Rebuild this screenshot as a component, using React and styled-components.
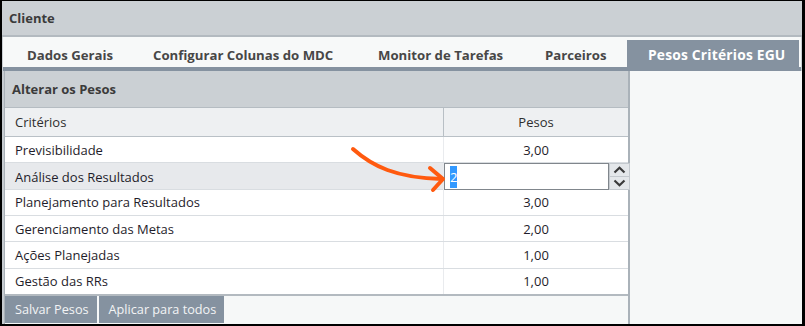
import React from "react";
import styled, { createGlobalStyle } from "styled-components";

const Global = createGlobalStyle`
  html, body { margin: 0; padding: 0; background: #fff; }
  body { font-family: "Open Sans", "Noto Sans", sans-serif; }
  * { box-sizing: border-box; }
`;

const Frame = styled.div`
  position: relative;
  width: 805px;
  height: 326px;
  border-style: solid;
  border-color: #000;
  border-width: 1px 3px 2px 2px;
  background: #cbd0d4;
  display: flex;
  flex-direction: column;
  overflow: hidden;
`;

const TitleBar = styled.div`
  flex: none;
  height: 36px;
  border-bottom: 2px solid #b3bac0;
  padding: 0 0 1px 7px;
  display: flex;
  align-items: center;
  font-weight: 700;
  font-size: 13px;
  color: #3b3b3b;
`;

const TabBar = styled.div`
  flex: none;
  height: 30px;
  margin: 0 1px;
  padding-left: 2px;
  background: #f7f9f9;
  display: flex;
  align-items: flex-end;
`;

const Tab = styled.div`
  flex: none;
  width: ${(p) => p.$w}px;
  height: ${(p) => (p.$active ? "27px" : "30px")};
  padding: ${(p) => (p.$active ? "2px 0 0 21px" : "5px 0 0 22px")};
  display: flex;
  align-items: center;
  white-space: nowrap;
  font-weight: 700;
  font-size: ${(p) => (p.$active ? "13.8px" : "13.2px")};
  letter-spacing: ${(p) => (p.$active ? "0.2px" : "0")};
  color: ${(p) => (p.$active ? "#ffffff" : "#474747")};
  background: ${(p) => (p.$active ? "#8592a0" : "transparent")};
`;

const Strip = styled.div`
  flex: none;
  height: 4px;
  margin: 0 1px;
  background: #8592a0;
`;

const Body = styled.div`
  flex: 1;
  display: flex;
  padding-left: 2px;
  background: #c6cbd0;
`;

const Panel = styled.div`
  width: 626px;
  display: flex;
  flex-direction: column;
  border-left: 1px solid #a9b1b8;
  border-right: 2px solid #aab2b9;
  background: #f6f8f8;
`;

const PanelTitle = styled.div`
  height: 37px;
  border-bottom: 1px solid #b5bcc2;
  background: #cbd0d4;
  padding: 0 0 0 7px;
  display: flex;
  align-items: center;
  font-weight: 700;
  font-size: 13px;
  color: #3b3b3b;
`;

const Table = styled.div`
  background: #fff;
`;

const HeadRow = styled.div`
  display: grid;
  grid-template-columns: 439px 1fr;
  height: 29px;
  border-bottom: 1px solid #b9c0c6;
  background: #eef0f2;
`;

const HeadCell = styled.div`
  display: flex;
  align-items: center;
  justify-content: ${(p) => (p.$center ? "center" : "flex-start")};
  padding-left: ${(p) => (p.$center ? "0" : "10px")};
  border-right: ${(p) => (p.$center ? "none" : "1px solid #b8bfc5")};
  font-size: 13px;
  color: #2e2e2e;
`;

const Row = styled.div`
  display: grid;
  grid-template-columns: 439px 1fr;
  height: 26.33px;
  border-bottom: 1px solid #d9dde1;
  background: ${(p) => (p.$selected ? "#e7e9ec" : "#ffffff")};
  &:last-child {
    height: 27.33px;
    border-bottom: 2px solid #b3bac0;
  }
`;

const Cell = styled.div`
  display: flex;
  align-items: center;
  justify-content: ${(p) => (p.$center ? "center" : "flex-start")};
  padding-left: ${(p) => (p.$center ? "0" : "10px")};
  border-right: ${(p) => (p.$center ? "none" : "1px solid #e9ebee")};
  font-size: 13px;
  color: #1f1d2b;
  white-space: nowrap;
`;

const EditorCell = styled.div`
  display: flex;
  margin-right: -2px;
  height: 27px;
  position: relative;
  z-index: 1;
`;

const EditBox = styled.div`
  flex: 1;
  border: 1px solid #80868c;
  background: #fff;
  display: flex;
  align-items: center;
  padding-left: 5px;
  font-size: 13px;
`;

const Selected = styled.span`
  background: #3399ff;
  color: #fff;
  padding: 1px 0;
  line-height: 20px;
`;

const Spinner = styled.div`
  width: 21px;
  display: flex;
  flex-direction: column;
`;

const SpinBtn = styled.div`
  flex: 1;
  background: #e4e7ea;
  border: 1px solid #c4c9ce;
  border-top-width: ${(p) => (p.$down ? "0" : "1px")};
  display: flex;
  align-items: center;
  justify-content: center;
`;

const ButtonBar = styled.div`
  display: flex;
  gap: 2px;
  height: 27px;
  background: #f6f8f8;
`;

const Button = styled.button`
  border: none;
  margin: 0;
  padding: 0 8px 0 10px;
  background: #8592a0;
  color: #f3f4f5;
  font-family: inherit;
  font-size: 12.7px;
  cursor: pointer;
`;

const Side = styled.div`
  flex: 1;
  background: #f6f8f8;
`;

const Overlay = styled.svg`
  position: absolute;
  left: -2px;
  top: -1px;
  pointer-events: none;
  z-index: 5;
`;

const Chevron = ({ up }) => (
  <svg width="13" height="8" viewBox="0 0 13 8">
    <path
      d={up ? "M1.5 6.5 L6.5 1.8 L11.5 6.5" : "M1.5 1.5 L6.5 6.2 L11.5 1.5"}
      fill="none"
      stroke="#3a3a3a"
      strokeWidth="2.2"
    />
  </svg>
);

const tabs = [
  ["Dados Gerais", 126],
  ["Configurar Colunas do MDC", 225],
  ["Monitor de Tarefas", 167],
  ["Parceiros", 104],
];

const rows = [
  ["Previsibilidade", "3,00"],
  ["Análise dos Resultados", null],
  ["Planejamento para Resultados", "3,00"],
  ["Gerenciamento das Metas", "2,00"],
  ["Ações Planejadas", "1,00"],
  ["Gestão das RRs", "1,00"],
];

export default function App() {
  return (
    <>
      <Global />
      <Frame>
        <TitleBar>Cliente</TitleBar>
        <TabBar>
          {tabs.map(([label, w]) => (
            <Tab key={label} $w={w}>
              {label}
            </Tab>
          ))}
          <Tab $active $w={172}>
            Pesos Critérios EGU
          </Tab>
        </TabBar>
        <Strip />
        <Body>
          <Panel>
            <PanelTitle>Alterar os Pesos</PanelTitle>
            <Table>
              <HeadRow>
                <HeadCell>Critérios</HeadCell>
                <HeadCell $center>Pesos</HeadCell>
              </HeadRow>
              {rows.map(([name, val]) => (
                <Row key={name} $selected={val === null}>
                  <Cell>{name}</Cell>
                  {val === null ? (
                    <EditorCell>
                      <EditBox>
                        <Selected>2</Selected>
                      </EditBox>
                      <Spinner>
                        <SpinBtn>
                          <Chevron up />
                        </SpinBtn>
                        <SpinBtn $down>
                          <Chevron />
                        </SpinBtn>
                      </Spinner>
                    </EditorCell>
                  ) : (
                    <Cell $center>{val}</Cell>
                  )}
                </Row>
              ))}
            </Table>
            <ButtonBar>
              <Button>Salvar Pesos</Button>
              <Button>Aplicar para todos</Button>
            </ButtonBar>
          </Panel>
          <Side />
        </Body>
        <Overlay width="805" height="326" viewBox="0 0 805 326">
          <path
            d="M353 149 C 372 166, 396 178, 442 179"
            fill="none"
            stroke="#ff5a0f"
            strokeWidth="4"
            strokeLinecap="round"
          />
          <path
            d="M430 168 L443 179 L433 190"
            fill="none"
            stroke="#ff5a0f"
            strokeWidth="4"
            strokeLinecap="round"
            strokeLinejoin="round"
          />
        </Overlay>
      </Frame>
    </>
  );
}
